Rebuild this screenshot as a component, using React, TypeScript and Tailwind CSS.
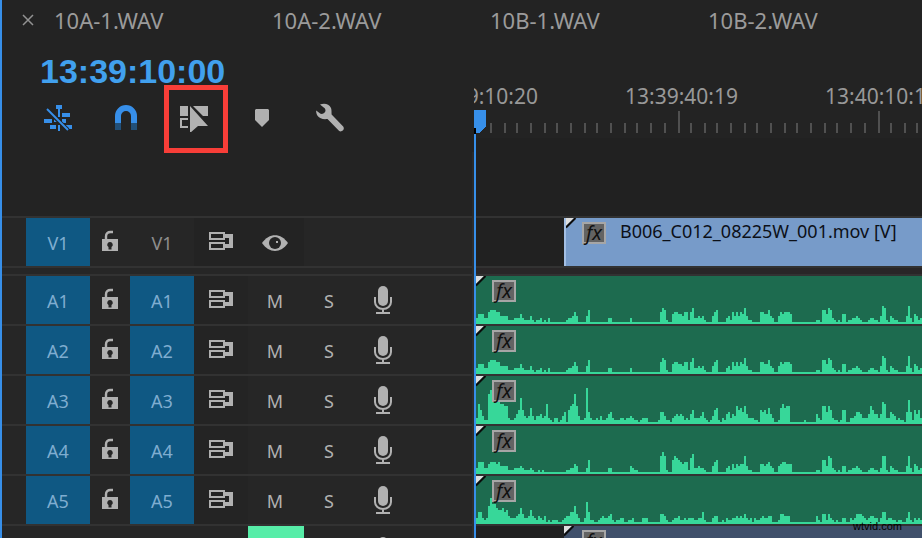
import type { ReactNode } from "react";

const TABS = ["10A-1.WAV", "10A-2.WAV", "10B-1.WAV", "10B-2.WAV"];

// One base-36 digit per 2px column, in 2px steps. Keys are the starting column.
type Peaks = Record<number, string>;

const QUIET: Peaks = {
  0: "3555336777664444222333532224212231213",
  45: "233464",
  55: "47",
  66: "33",
  77: "3",
  92: "6872",
  98: "5665546624",
  107: "68334342",
  118: "467",
  125: "3426464658422",
  142: "6655743",
  151: "4656665",
  170: "22177587321215512233432",
  196: "2332214982143221",
  215: "4931542",
  222: "3",
};

const LOUD: Peaks = {
  0: "3a7422fhggggaa99322357d743484244534a321331246",
  46: "79af9422",
  54: "3i63223242235632223323343221233",
  85: "3",
  91: "26642213454542325",
  108: "7333463212478213256354978695333221",
  142: "7675853",
  151: "28a899",
  164: "2",
  170: "5329969732212771133466533359755",
  201: "35ba33654232211",
  215: "6c62757",
  222: "3",
};

const MEDIUM: Peaks = {
  0: "3666335666564444222333432223211212",
  45: "223354",
  55: "37",
  66: "33",
  77: "4322",
  92: "9b92",
  98: "7987656624",
  107: "8a334332",
  118: "467",
  125: "3425354559422",
  142: "5545643",
  151: "4566555",
  170: "22177498321214412233432",
  196: "2332213992143221",
  215: "4931542",
  222: "3",
};

const LOW: Peaks = {
  0: "3663239daa8778674333458533474324324121222112344669",
  50: "53",
  54: "3b6221123433452122331122311",
  83: "333",
  92: "5542",
  98: "233422323",
  107: "33223362",
  118: "344112132233434353231322",
  142: "343344",
  151: "255444",
  170: "42155253212113311323555432344331",
  202: "36623322122",
  215: "36213232",
};

const AUDIO_TRACKS: { id: string; peaks: Peaks }[] = [
  { id: "A1", peaks: QUIET },
  { id: "A2", peaks: QUIET },
  { id: "A3", peaks: LOUD },
  { id: "A4", peaks: MEDIUM },
  { id: "A5", peaks: LOW },
];

function wavePath(peaks: Peaks) {
  let d = "M0 46H446V48H0Z";
  for (const [start, heights] of Object.entries(peaks)) {
    heights.split("").forEach((c, i) => {
      const h = parseInt(c, 36) * 2;
      d += `M${(Number(start) + i) * 2} 48v${-h}h2v${h}z`;
    });
  }
  return d;
}

function NestIcon() {
  return (
    <svg width="28" height="28" viewBox="0 0 28 28" fill="#378fe9">
      <path d="M12 1h6v4h-2v8h-2V5h-2zM18 9h8v4h-8zM20 17v-2h2v2zM0 15h8v4H0zM10 15h4v3h-4zM18 15h4v4h-4zM6 21h6v4H6zM14 21h2v6h-2zM22 21h6v4h-6z" />
      <path d="M2 5l22 21" stroke="#232323" strokeWidth="4" />
      <path d="M3 5l21 21" stroke="#378fe9" strokeWidth="2" />
    </svg>
  );
}

function MagnetIcon() {
  return (
    <svg width="22" height="26" viewBox="0 0 22 26" fill="none" strokeWidth="6">
      <path d="M3 18v-7a8 8 0 0 1 16 0v7" stroke="#378fe9" />
      <path d="M3 18v7M19 18v7" stroke="#225079" />
    </svg>
  );
}

function LinkedSelectionIcon() {
  return (
    <svg width="28" height="28" viewBox="0 0 28 28" fill="#b1b1b1">
      <path d="M0 2h8v10H0zM13 2h15v10h-5z" />
      <path d="M8 15H1v8h7" fill="none" stroke="#b1b1b1" strokeWidth="2" />
      <path d="M10 2v27l8-7h10z" />
    </svg>
  );
}

function MarkerIcon() {
  return (
    <svg width="14" height="18" viewBox="0 0 14 18" fill="#b1b1b1">
      <path d="M1 0h12l1 1v10l-7 7-7-7V1z" />
    </svg>
  );
}

function WrenchIcon() {
  return (
    <svg width="28" height="30" viewBox="0 0 28 30" fill="#b1b1b1">
      <path d="M4 1.500C8 0 13 .5 15 5c.7 1.800.5 4 .6 6.500L27.200 23.500c2 2.800-1.200 6-4 4.600L11.500 16C7 16.600 3.500 15.500 1.700 13 .3 11 0 9 .2 7.500l4.300 3.300c2 .5 4-.6 4.800-2.200.5-1.800-.1-3.300-1.600-4.200z" />
    </svg>
  );
}

function LockIcon() {
  return (
    <svg width="16" height="24" viewBox="0 0 16 24">
      <path d="M4 10V6.500C4 3.500 5.800 2 8.500 2H11" fill="none" stroke="#b1b1b1" strokeWidth="2.400" />
      <path d="M0 9h16v12H0z" fill="#b1b1b1" />
      <path d="M8 12a2.700 2.700 0 0 1 1.500 5v2.500h-3V17A2.700 2.700 0 0 1 8 12z" fill="#262626" />
    </svg>
  );
}

function SyncIcon() {
  return (
    <svg width="24" height="20" viewBox="0 0 24 20" fill="none" stroke="#b1b1b1" strokeWidth="2">
      <path d="M1 1h14v6H1zM1 11h14v6H1z" />
      <path d="M16 2h8v14h-8v-4h4V6h-4z" fill="#b1b1b1" stroke="none" />
    </svg>
  );
}

function EyeIcon() {
  return (
    <svg width="26" height="16" viewBox="0 0 26 16">
      <path d="M0 8C7-2.500 19-2.500 26 8 19 18.500 7 18.500 0 8z" fill="#b1b1b1" />
      <circle cx="13" cy="8" r="6" fill="#242424" />
      <path d="M14 6h2v2h-2z" fill="#b1b1b1" />
    </svg>
  );
}

function MicIcon() {
  return (
    <svg width="18" height="28" viewBox="0 0 18 28" fill="none" stroke="#b1b1b1" strokeWidth="2">
      <rect x="4" y="0" width="10" height="20" rx="5" fill="#b1b1b1" stroke="none" />
      <path d="M1 11v5c0 4 3.500 7 8 7s8-3 8-7v-5M9 23v4M2 27h14" />
    </svg>
  );
}

function ClipCorner() {
  return (
    <svg className="absolute left-0 top-0" width="11" height="11" viewBox="0 0 11 11">
      <path d="M0 0h8L0 8z" fill="#dedede" />
      <path d="M0 9.500L9.500 0" stroke="#0b0b0b" strokeWidth="2" />
    </svg>
  );
}

function FxBadge() {
  return (
    <span className="flex h-[22px] w-6 shrink-0 items-center justify-center border-2 border-[#a6a6a6] bg-[#636363] text-xl leading-4 text-[#101010] italic">
      fx
    </span>
  );
}

function IconButton({ label, className, children }: { label: string; className: string; children?: ReactNode }) {
  return (
    <button type="button" aria-label={label} className={`flex shrink-0 items-center justify-center ${className}`}>
      {children}
    </button>
  );
}

function AudioHeader({ id }: { id: string }) {
  return (
    <div className="flex h-[50px] border-b-2 border-[#323232] pl-6 text-lg text-[#b1b1b1]">
      <button type="button" aria-label={`Source ${id}`} className="w-16 bg-[#0f5883] pt-0.5 text-[#7fadd0]">
        {id}
      </button>
      <IconButton label={`Lock ${id}`} className="w-10">
        <LockIcon />
      </IconButton>
      <button type="button" aria-label={`Target ${id}`} className="w-16 bg-[#0f5883] pt-0.5 text-[#7fadd0]">
        {id}
      </button>
      <IconButton label={`Sync lock ${id}`} className="w-[54px] bg-[#242424]">
        <SyncIcon />
      </IconButton>
      <button type="button" aria-label={`Mute ${id}`} className="w-[54px] pt-0.5">
        M
      </button>
      <button type="button" aria-label={`Solo ${id}`} className="w-[54px] pt-0.5">
        S
      </button>
      <IconButton label={`Record ${id}`} className="w-[54px]">
        <MicIcon />
      </IconButton>
    </div>
  );
}

function Ruler() {
  const minor = Array.from({ length: 34 }, (_, i) => 2 * Math.floor((677.9 + ((i - 14) * 40) / 3) / 2) - 474).filter(
    (x) => x !== 202 && x !== 402,
  );
  return (
    <div className="relative h-[60px] overflow-hidden text-[21px] leading-7 text-[#989898]">
      <div className="absolute -left-[49px] top-1 flex whitespace-nowrap">
        <span className="w-[200px] shrink-0">13:39:10:20</span>
        <span className="w-[200px] shrink-0">13:39:40:19</span>
        <span className="w-[200px] shrink-0">13:40:10:18</span>
      </div>
      <svg className="absolute left-0 top-8" width="448" height="26" shapeRendering="crispEdges">
        {minor.map((x) => (
          <path key={x} d={`M${x} 13h2v10h-2z`} fill="#505050" />
        ))}
        <path d="M204 1h2v22h-2zM404 1h2v22h-2z" fill="#505050" />
        <path d="M0 0h12v16l-7 7H0z" fill="#378fe9" />
        <path d="M0 18h2v6H0z" fill="#000" />
      </svg>
    </div>
  );
}

function AudioClip({ id, peaks }: { id: string; peaks: Peaks }) {
  return (
    <div className="relative h-[50px] overflow-hidden border-b-2 border-[#323232] bg-[#1d6b4f] pl-4 pt-1">
      <svg className="absolute bottom-0 left-0" width="446" height="48" shapeRendering="crispEdges" aria-label={`Waveform ${id}`}>
        <path d={wavePath(peaks)} fill="#37d799" />
      </svg>
      <ClipCorner />
      <div className="relative">
        <FxBadge />
      </div>
    </div>
  );
}

export default function App() {
  return (
    <div className="flex h-screen flex-col overflow-hidden border-l-2 border-[#378fe9] bg-[#232323] font-['Noto_Sans','Open_Sans',sans-serif]">
      <nav className="flex h-10 shrink-0 items-center text-[22px] leading-8 text-[#9b9b9b]">
        <button type="button" aria-label="Close sequence" className="flex w-[52px] shrink-0 justify-center">
          <svg width="12" height="12" viewBox="0 0 12 12" stroke="#929292" strokeWidth="1.500">
            <path d="M1 1l10 10M11 1L1 11" />
          </svg>
        </button>
        {TABS.map((tab) => (
          <button key={tab} type="button" className="w-[218px] shrink-0 text-left">
            {tab}
          </button>
        ))}
      </nav>

      <div className="flex min-h-0 flex-1">
        <section className="w-[472px] shrink-0">
          <div className="h-11 pl-[38px] pt-2 font-['Liberation_Sans',sans-serif] text-[34px] leading-[46px] font-bold text-[#41a0ee]">
            13:39:10:00
          </div>
          <div className="flex h-[68px] gap-1 pl-6">
            <IconButton label="Nest sequences" className="w-16">
              <NestIcon />
            </IconButton>
            <IconButton label="Snap" className="w-16">
              <MagnetIcon />
            </IconButton>
            <div className="relative flex">
              <IconButton label="Linked selection" className="w-16">
                <LinkedSelectionIcon />
              </IconButton>
              <span className="pointer-events-none absolute -right-0.5 top-px h-[68px] w-16 border-[5px] border-[#f83e38]" />
            </div>
            <IconButton label="Add marker" className="w-16">
              <MarkerIcon />
            </IconButton>
            <IconButton label="Display settings" className="w-16">
              <WrenchIcon />
            </IconButton>
          </div>
          <div className="h-16 border-r-2 border-[#2a2a2a]" />

          <div className="border-r-2 border-[#2e2e2e] bg-[#262626]">
            <div className="flex h-[52px] border-y-2 border-[#323232] pl-6 text-lg">
              <button type="button" aria-label="Source V1" className="w-16 bg-[#0f5883] pt-0.5 text-[#7fadd0]">
                V1
              </button>
              <IconButton label="Lock V1" className="w-10">
                <LockIcon />
              </IconButton>
              <button type="button" aria-label="Target V1" className="w-16 pt-0.5 text-[#8d8d8d]">
                V1
              </button>
              <IconButton label="Sync lock V1" className="w-[54px] bg-[#232323]">
                <SyncIcon />
              </IconButton>
              <IconButton label="Toggle V1 output" className="w-14 bg-[#232323] pt-0.5 pr-0.5">
                <EyeIcon />
              </IconButton>
            </div>
            <div className="h-2 border-b-2 border-[#323232]" />
            {AUDIO_TRACKS.map((t) => (
              <AudioHeader key={t.id} id={t.id} />
            ))}
            <div className="flex h-[50px] pl-[246px]">
              <button type="button" aria-label="Mute A6" className="w-14 bg-[#57eda8]" />
              <IconButton label="Record A6" className="ml-[52px] w-[54px]">
                <MicIcon />
              </IconButton>
            </div>
          </div>
        </section>

        <section className="relative min-w-0 flex-1">
          <div className="h-[38px]" />
          <Ruler />
          <div className="h-[78px] bg-[#212121]" />
          <div className="bg-[#212121] pl-0.5">
            <div className="flex h-[52px] border-y-2 border-[#323232] pl-[88px]">
              <div className="relative flex flex-1 gap-3.5 overflow-hidden border-l-2 border-[#a3bfe4] bg-[#779bc9] pl-4 pt-1">
                <ClipCorner />
                <FxBadge />
                <span className="text-lg leading-[18px] whitespace-nowrap text-[#0c1018]">B006_C012_08225W_001.mov [V]</span>
              </div>
            </div>
            <div className="h-2 border-b-2 border-[#323232] bg-[#292627]" />
            {AUDIO_TRACKS.map((t) => (
              <AudioClip key={t.id} id={t.id} peaks={t.peaks} />
            ))}
            <div className="flex h-[50px] pl-[88px]">
              <div className="relative flex-1 bg-[#40506b] pl-[18px] pt-1">
                <ClipCorner />
                <FxBadge />
              </div>
            </div>
          </div>
          <span className="absolute bottom-0 left-0 top-[94px] w-0.5 bg-[#378fe9]" />
        </section>
      </div>
      <span className="absolute bottom-1 right-5 font-['Liberation_Sans',sans-serif] text-[11px] leading-4 text-black">wtvid.com</span>
    </div>
  );
}
